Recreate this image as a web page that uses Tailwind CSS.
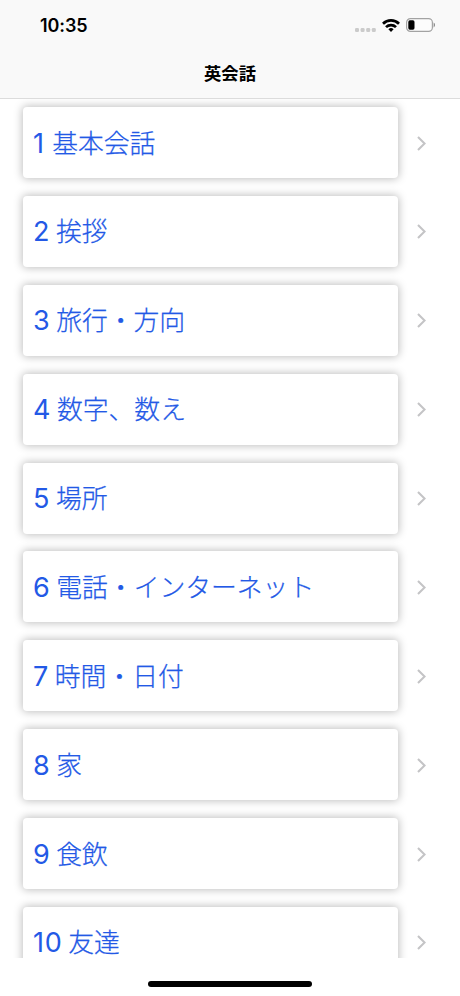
<!DOCTYPE html>
<html lang="ja">
<head>
    <meta charset="UTF-8">
    <meta name="viewport" content="width=device-width, initial-scale=1.0">
    <title>英会話</title>
    <script src="https://cdn.jsdelivr.net/npm/@tailwindcss/browser@4"></script>
</head>
<body class="bg-white font-['Inter','Noto_Sans_CJK_JP',sans-serif] w-[460px] h-[996px] flex flex-col overflow-hidden">

    <!-- Status bar and title -->
    <header class="h-[99px] shrink-0 bg-[#f9f9f9] border-b border-[#dcdcdc]">
        <div class="h-[50px] flex items-center justify-between pl-10 pr-6">
            <span class="text-[18px] leading-6 font-semibold tracking-[-0.1px] text-black pt-0.5">10:35</span>
            <div class="flex items-center">
                <svg class="w-[21px] h-[4px] mt-[10px] mr-[6px]" viewBox="0 0 21 4" fill="#cbcbcb">
                    <rect x="0" y="0" width="4" height="4" rx="1.3"/>
                    <rect x="5.6" y="0" width="4" height="4" rx="1.3"/>
                    <rect x="11.2" y="0" width="4" height="4" rx="1.3"/>
                    <rect x="16.8" y="0" width="4" height="4" rx="1.3"/>
                </svg>
                <svg class="w-[18px] h-[13px] mr-[6px]" viewBox="0 0 18 13" fill="none" stroke="#000" stroke-width="2.7">
                    <path d="M1 4.7a11.4 11.4 0 0 1 16 0"/>
                    <path d="M4 8.1a7.2 7.2 0 0 1 10 0"/>
                    <path d="M6.4 10.3a3.8 3.8 0 0 1 5.2 0L9 13z" fill="#000" stroke="none"/>
                </svg>
                <svg class="w-[30px] h-[14px]" viewBox="0 0 30 14">
                    <rect x="0.6" y="0.6" width="25.8" height="12.8" rx="3.8" fill="#fcfcfc" stroke="#a3a3a3" stroke-width="1.2"/>
                    <rect x="2.3" y="2.3" width="6.2" height="9.4" rx="1.6" fill="#000"/>
                    <path d="M27.6 4.6c1.9.8 1.9 4 0 4.8z" fill="#8c8c8c"/>
                </svg>
            </div>
        </div>
        <h1 class="h-[48px] flex items-center justify-center text-[17.3px] font-bold text-black">英会話</h1>
    </header>

    <!-- Topic list, filled below -->
    <main id="topics" class="h-[859px] shrink-0 overflow-hidden pt-2 flex flex-col gap-[17.88px]"></main>

    <!-- Home indicator -->
    <footer class="flex-1 flex justify-center pt-[23px]">
        <div class="w-[164px] h-[6px] rounded-full bg-black"></div>
    </footer>

    <script>
        const topics = ["基本会話", "挨拶", "旅行・方向", "数字、数え", "場所", "電話・インターネット", "時間・日付", "家", "食飲", "友達"];

        document.getElementById("topics").innerHTML = topics.map((name, i) => `
            <div class="h-[71px] shrink-0 flex items-center pl-[23px] pr-[34px]">
                <div class="w-[375px] h-[71px] rounded-[4px] bg-white shadow-[0_0_8px_1px_rgba(0,0,0,0.25)] flex items-center pl-[10px] pt-0.5 text-[#2359e6]">
                    <span class="min-w-[13.5px] text-[27px] leading-[36px] tracking-[0.8px]">${i + 1}</span>
                    <span class="text-[25.8px] leading-[36px] font-light ml-[5.7px] [-webkit-text-stroke:0.25px_#2359e6]">${name}</span>
                </div>
                <svg class="w-[9px] h-[15px] ml-auto mt-px" viewBox="0 0 9 15" fill="none" stroke="#c4c4c6" stroke-width="2.1">
                    <path d="M1 1l6.6 6.5L1 14"/>
                </svg>
            </div>`).join("");
    </script>

</body>
</html>
